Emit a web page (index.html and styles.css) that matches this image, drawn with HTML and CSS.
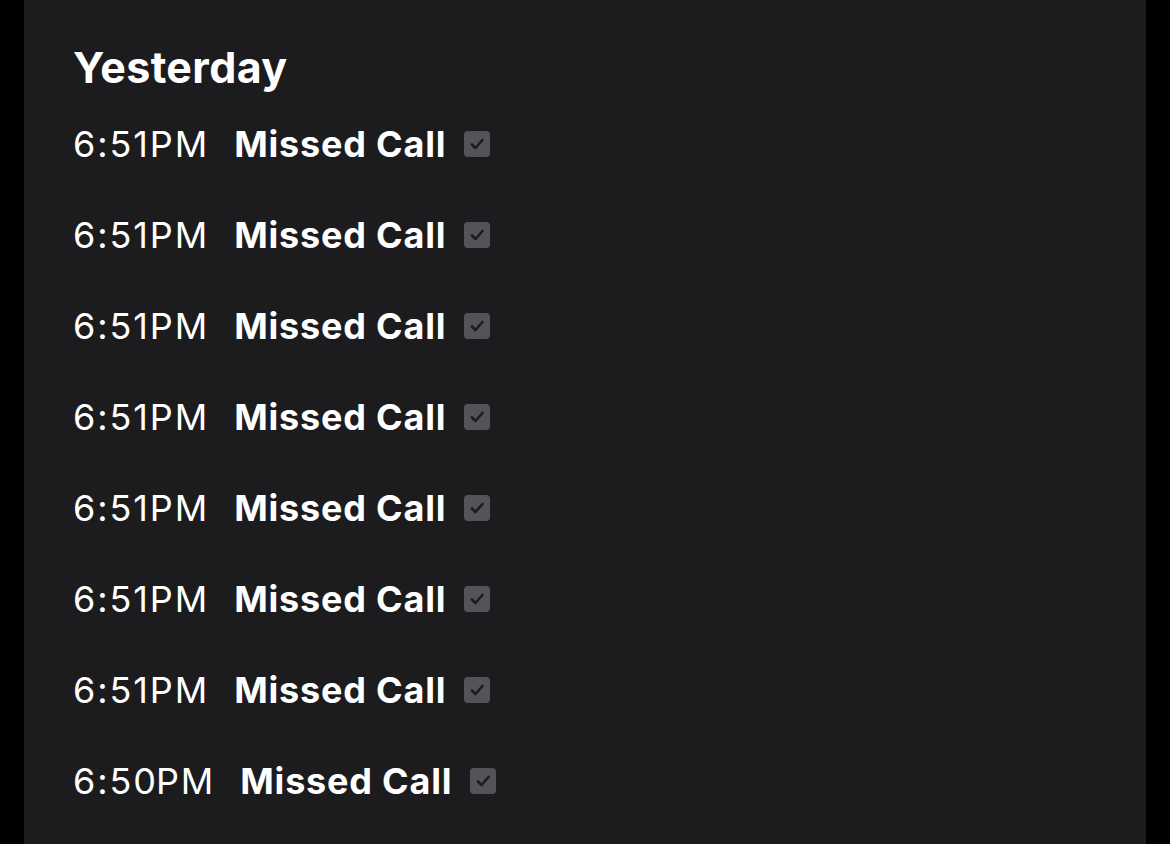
FILE: index.html
```html
<!DOCTYPE html>
<html lang="en">
<head>
    <meta charset="UTF-8">
    <title>Recents</title>
    <link rel="stylesheet" href="styles.css">
</head>
<body>
    <div class="panel">
        <h1 class="day">Yesterday</h1>
        <ul class="calls">
            <li class="call"><span class="time">6:51PM</span><span class="label">Missed Call</span><span class="check"><svg viewBox="0 0 26 26"><path d="M8 13.5l3.5 3.5 7-8"/></svg></span></li>
            <li class="call"><span class="time">6:51PM</span><span class="label">Missed Call</span><span class="check"><svg viewBox="0 0 26 26"><path d="M8 13.5l3.5 3.5 7-8"/></svg></span></li>
            <li class="call"><span class="time">6:51PM</span><span class="label">Missed Call</span><span class="check"><svg viewBox="0 0 26 26"><path d="M8 13.5l3.5 3.5 7-8"/></svg></span></li>
            <li class="call"><span class="time">6:51PM</span><span class="label">Missed Call</span><span class="check"><svg viewBox="0 0 26 26"><path d="M8 13.5l3.5 3.5 7-8"/></svg></span></li>
            <li class="call"><span class="time">6:51PM</span><span class="label">Missed Call</span><span class="check"><svg viewBox="0 0 26 26"><path d="M8 13.5l3.5 3.5 7-8"/></svg></span></li>
            <li class="call"><span class="time">6:51PM</span><span class="label">Missed Call</span><span class="check"><svg viewBox="0 0 26 26"><path d="M8 13.5l3.5 3.5 7-8"/></svg></span></li>
            <li class="call"><span class="time">6:51PM</span><span class="label">Missed Call</span><span class="check"><svg viewBox="0 0 26 26"><path d="M8 13.5l3.5 3.5 7-8"/></svg></span></li>
            <li class="call"><span class="time">6:50 PM</span><span class="label">Missed Call</span><span class="check"><svg viewBox="0 0 26 26"><path d="M8 13.5l3.5 3.5 7-8"/></svg></span></li>
        </ul>
    </div>
</body>
</html>
```

FILE: styles.css
```css
body {
    margin: 0;
    background: #000000;
    font-family: Inter, "Noto Sans", sans-serif;
    color: #ffffff;
    height: 844px;
    overflow: hidden;
}
.panel {
    margin: 0 24px;
    height: 844px;
    background: #1c1c1e;
    padding: 40px 0 0 49px;
    box-sizing: border-box;
}
.day {
    margin: 0;
    font-size: 43px;
    font-weight: 700;
    line-height: 54px;
    letter-spacing: 0.4px;
}
.calls {
    list-style: none;
    margin: 28px 0 0;
    padding: 0;
    display: flex;
    flex-direction: column;
    gap: 47px;
}
.call {
    display: flex;
    align-items: center;
    height: 44px;
    font-size: 36px;
}
.time {
    font-weight: 400;
    letter-spacing: 1.9px;
    word-spacing: -14px;
    margin-right: 25px;
}
.label {
    font-weight: 700;
    letter-spacing: 0.8px;
    margin-right: 18px;
}
.check {
    width: 26px;
    height: 26px;
    border-radius: 4px;
    background: #545458;
    display: flex;
}
.check svg {
    width: 26px;
    height: 26px;
    fill: none;
    stroke: #1c1c1e;
    stroke-width: 2.6;
    stroke-linecap: round;
    stroke-linejoin: round;
}
```
